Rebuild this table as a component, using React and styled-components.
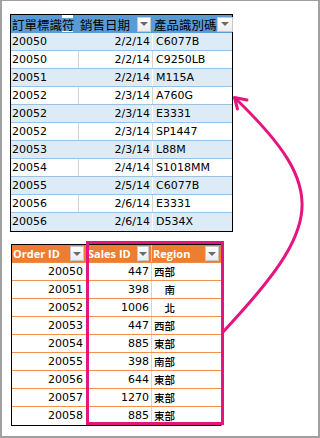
import styled, { createGlobalStyle } from "styled-components";

const GlobalStyle = createGlobalStyle`
  html, body {
    margin: 0;
    padding: 0;
    background: #fff;
  }
`;

const Frame = styled.div`
  position: relative;
  width: 320px;
  height: 438px;
  box-sizing: border-box;
  border: 2px solid #a0a0a0;
  border-top-width: 1px;
  padding: 13px 0 0 8px;
  background: #fff;
  font-family: "DejaVu Sans", sans-serif;
  font-size: 11px;
  color: #000;
  overflow: hidden;
`;

/* ---------- top table (blue) ---------- */

const BlueTable = styled.div`
  width: 223px;
  box-sizing: border-box;
  border: 1px solid #000;
`;

const BlueRow = styled.div`
  display: grid;
  grid-template-columns: 68px 74px 79px;
  height: 18px;
  box-sizing: border-box;
  background: ${({ $alt }) => ($alt ? "#fff" : "#ddebf7")};
  border-bottom: ${({ $last }) => ($last ? "none" : "1px solid #9bc2e6")};
`;

const BlueHead = styled.div`
  display: grid;
  grid-template-columns: 68px 74px 79px;
  height: 18px;
  background: #5b9bd5;
`;

const HeadCell = styled.div`
  position: relative;
  display: flex;
  align-items: center;
  justify-content: space-between;
  padding-left: 1px;
  padding-right: ${({ $pad }) => $pad ?? 2}px;
  font-family: "Noto Sans CJK TC", "Noto Sans CJK SC", sans-serif;
  font-size: 12.5px;
  white-space: nowrap;
`;

const HeadLabel = styled.span`
  position: relative;
  z-index: 1;
  line-height: 13px;
  background: #5b9bd5;
`;

/* the first column's filter button, mostly hidden behind its label */
const Peek = styled.div`
  position: absolute;
  top: 0;
  right: 6px;
  width: 11px;
  height: 17px;
  background: #fff;
`;

const DropButton = styled.div`
  display: flex;
  align-items: center;
  justify-content: center;
  width: ${({ $w }) => $w ?? 14}px;
  height: 15px;
  box-sizing: border-box;
  border: 1px solid #c8c8c8;
  background: linear-gradient(#ffffff, #ececec);
  flex: none;

  &::after {
    content: "";
    border-left: 4px solid transparent;
    border-right: 4px solid transparent;
    border-top: 4px solid #6b6b6b;
  }
`;

const Cell = styled.div`
  padding: 0 ${({ $right }) => $right ?? 0}px 0 ${({ $left }) => $left ?? 0}px;
  text-align: ${({ $align }) => $align ?? "left"};
  line-height: 17px;
  white-space: pre;
  border-right: 1px solid ${({ $line }) => $line ?? "transparent"};
  overflow: hidden;
`;

/* ---------- bottom table (orange) ---------- */

const OrangeWrap = styled.div`
  position: relative;
  margin: 12px 0 0 1px;
  width: 211px;
`;

const OrangeTable = styled.div`
  box-sizing: border-box;
  border: 1px solid #000;
  border-right-color: transparent;
`;

const OrangeHead = styled.div`
  display: grid;
  grid-template-columns: 75px 65px 69px;
  height: 17px;
  background: #ed7d31;
  border-bottom: 1px solid #f08a4a;
`;

const OrangeHeadCell = styled.div`
  display: flex;
  align-items: center;
  justify-content: space-between;
  padding: 0 ${({ $pad }) => $pad ?? 2}px 0 1px;
  color: #fff;
  font-family: "Open Sans", sans-serif;
  font-weight: 700;
  font-size: 11px;
  border-right: 1px solid ${({ $line }) => $line ?? "transparent"};
`;

const OrangeRow = styled.div`
  display: grid;
  grid-template-columns: 75px 65px 69px;
  height: 18px;
  box-sizing: border-box;
  border-bottom: ${({ $last }) => ($last ? "none" : "1px solid #f0914f")};
`;

const RegionCell = styled.div`
  padding-left: 2px;
  line-height: 17px;
  white-space: pre;
  font-family: "Noto Sans CJK TC", "Noto Sans CJK SC", sans-serif;
  font-size: 10.5px;
  font-weight: 500;
`;

const Highlight = styled.div`
  position: absolute;
  left: 75px;
  top: -3px;
  width: 138px;
  height: 184px;
  box-sizing: border-box;
  border: 3px solid #e4157f;
  pointer-events: none;
`;

const ArrowLayer = styled.svg`
  position: absolute;
  left: -2px;
  top: -1px;
  pointer-events: none;
`;

const products = [
  ["20050", "2/2/14", "C6077B"],
  ["20050", "2/2/14", "C9250LB"],
  ["20051", "2/2/14", "M115A"],
  ["20052", "2/3/14", "A760G"],
  ["20052", "2/3/14", "E3331"],
  ["20052", "2/3/14", "SP1447"],
  ["20053", "2/3/14", "L88M"],
  ["20054", "2/4/14", "S1018MM"],
  ["20055", "2/5/14", "C6077B"],
  ["20056", "2/6/14", "E3331"],
  ["20056", "2/6/14", "D534X"],
];

const orders = [
  ["20050", "447", "西部"],
  ["20051", "398", "　南"],
  ["20052", "1006", "　北"],
  ["20053", "447", "西部"],
  ["20054", "885", "東部"],
  ["20055", "398", "南部"],
  ["20056", "644", "東部"],
  ["20057", "1270", "東部"],
  ["20058", "885", "東部"],
];

export default function App() {
  return (
    <>
      <GlobalStyle />
      <Frame>
        <BlueTable>
          <BlueHead>
            <HeadCell $pad={0}>
              <HeadLabel>訂單標識符</HeadLabel>
              <Peek />
            </HeadCell>
            <HeadCell $pad={2}>
              <HeadLabel>銷售日期</HeadLabel>
              <DropButton />
            </HeadCell>
            <HeadCell $pad={0}>
              <HeadLabel>產品識別碼</HeadLabel>
              <DropButton $w={16} />
            </HeadCell>
          </BlueHead>
          {products.map(([id, date, code], i) => {
            const alt = i % 2 === 1;
            return (
              <BlueRow key={i} $alt={alt} $last={i === products.length - 1}>
                <Cell $left={1} $line={alt ? "#d4d4d4" : "transparent"}>
                  {id}
                </Cell>
                <Cell $align="right" $right={2} $line={alt ? "#d4d4d4" : "#fff"}>
                  {date}
                </Cell>
                <Cell $left={3}>{code}</Cell>
              </BlueRow>
            );
          })}
        </BlueTable>

        <OrangeWrap>
          <OrangeTable>
            <OrangeHead>
              <OrangeHeadCell>
                Order ID
                <DropButton />
              </OrangeHeadCell>
              <OrangeHeadCell $line="#f6c6a4">
                Sales ID
                <DropButton $w={12} />
              </OrangeHeadCell>
              <OrangeHeadCell $pad={1}>
                Region
                <DropButton />
              </OrangeHeadCell>
            </OrangeHead>
            {orders.map(([id, sales, region], i) => (
              <OrangeRow key={i} $last={i === orders.length - 1}>
                <Cell $align="right" $right={3}>
                  {id}
                </Cell>
                <Cell $align="right" $right={2} $line="#d4d4d4">
                  {sales}
                </Cell>
                <RegionCell>{region}</RegionCell>
              </OrangeRow>
            ))}
          </OrangeTable>
          <Highlight />
        </OrangeWrap>

        <ArrowLayer width="320" height="438" viewBox="0 0 320 438">
          <path
            d="M223 332 C322 226 330 190 236 99"
            fill="none"
            stroke="#e4157f"
            strokeWidth="3"
            strokeLinecap="round"
          />
          <polyline
            points="247,100 234.5,97.5 237.5,109"
            fill="none"
            stroke="#e4157f"
            strokeWidth="3"
            strokeLinecap="round"
            strokeLinejoin="round"
          />
        </ArrowLayer>
      </Frame>
    </>
  );
}
